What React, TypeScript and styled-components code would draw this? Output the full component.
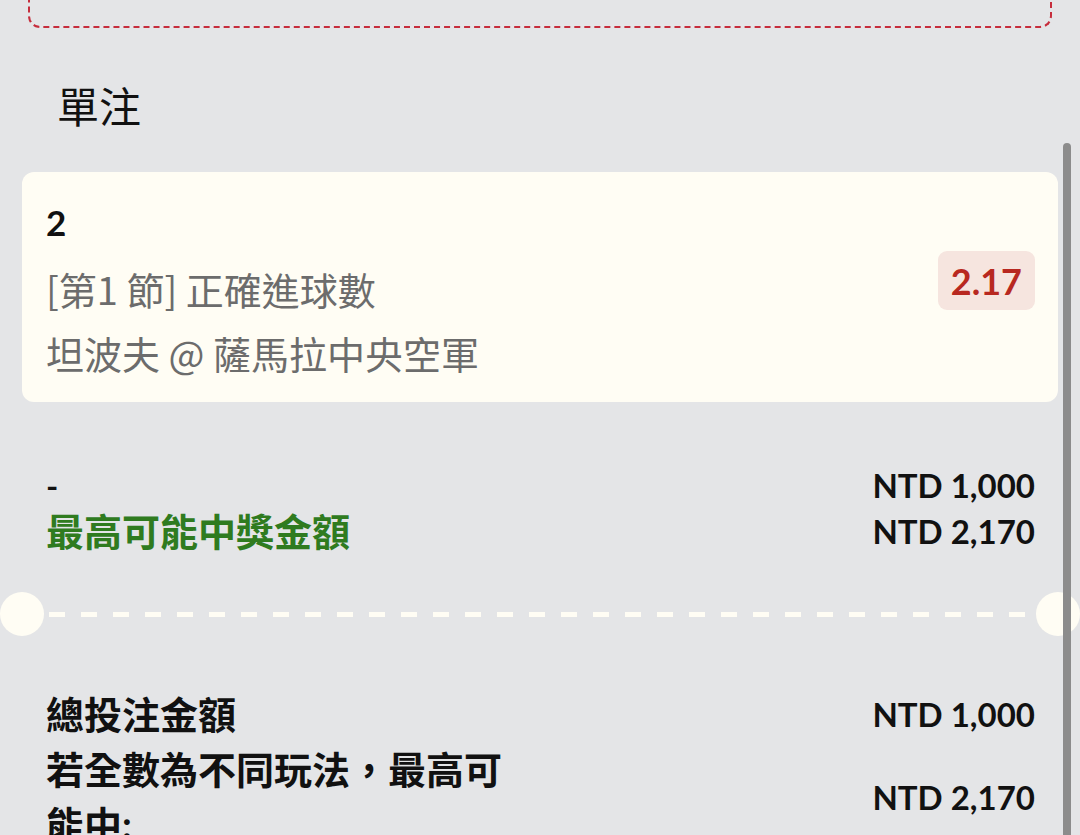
import styled, {createGlobalStyle} from "styled-components";

const GlobalStyle = createGlobalStyle`
    html, body {
        margin: 0;
        padding: 0;
        background: #e4e5e7;
        overflow: hidden;
    }

    body {
        font-family: Lato, "Noto Sans CJK TC", "Noto Sans", sans-serif;
        color: #111;
    }
`

const Page = styled.div`
    position: relative;
    width: 1080px;
    height: 835px;
    overflow: hidden;
`

const CouponBox = styled.div`
    height: 64px;
    margin: -38px 28px 0 28px;
    border: 2px dashed #c62d3c;
    border-top: none;
    border-radius: 0 0 12px 12px;
`

const Title = styled.h2`
    margin: 52px 0 0 0;
    padding-left: 57px;
    font-family: "Noto Sans CJK TC", sans-serif;
    font-size: 42px;
    line-height: 50px;
    font-weight: 400;
    color: #111;
`

const Card = styled.div`
    margin: 42px 22px 0 22px;
    padding: 30px 23px 17px 24px;
    background: #fffdf4;
    border-radius: 12px;
    display: flex;
    align-items: center;
    justify-content: space-between;
`

const CardInfo = styled.div`
    display: flex;
    flex-direction: column;
`

const Selection = styled.div`
    font-size: 35px;
    line-height: 40px;
    font-weight: 700;
    margin-bottom: 15px;
`

const InfoLine = styled.div`
    font-family: "Noto Sans CJK TC", sans-serif;
    font-size: 38px;
    line-height: 64px;
    color: #6c6c6c;
`

const Odds = styled.div`
    margin-bottom: 26px;
    padding: 0 13px;
    height: 59px;
    display: flex;
    align-items: center;
    background: #f6e5df;
    border-radius: 9px;
    color: #b82820;
    font-size: 36px;
    font-weight: 700;
`

const Rows = styled.div<{ top: number; lineHeight: number }>`
    margin-top: ${({top}) => top}px;
    padding: 0 45px 0 46px;
    display: flex;
    flex-direction: column;
    line-height: ${({lineHeight}) => lineHeight}px;
`

const Row = styled.div`
    display: flex;
    justify-content: space-between;
    align-items: center;
`

const Label = styled.div<{ tone?: "green" }>`
    max-width: 480px;
    font-size: 38px;
    font-weight: 700;
    color: ${({tone}) => tone === "green" ? "#2f7b1f" : "#111"};
`

const Dash = styled.div`
    font-size: 33px;
    font-weight: 700;
`

const Amount = styled.div`
    font-size: 33px;
    font-weight: 700;
    white-space: nowrap;
`

const Divider = styled.div`
    margin-top: 38px;
    height: 44px;
    display: flex;
    align-items: center;
`

const Notch = styled.div`
    width: 44px;
    height: 44px;
    border-radius: 50%;
    background: #fffdf4;
    flex-shrink: 0;
`

const DashLine = styled.div`
    flex: 1;
    height: 5px;
    margin: 0 6px 0 5px;
    background: repeating-linear-gradient(to right, #fffdf4 0 16px, transparent 16px 32px);
`

const ScrollThumb = styled.div`
    position: absolute;
    right: 9px;
    top: 143px;
    width: 8px;
    height: 760px;
    border-radius: 4px;
    background: #8c8c8c;
`

export default function App() {
    return (
        <>
            <GlobalStyle/>
            <Page>
                <CouponBox/>
                <Title>單注</Title>
                <Card>
                    <CardInfo>
                        <Selection>2</Selection>
                        <InfoLine>[第1 節] 正確進球數</InfoLine>
                        <InfoLine>坦波夫 @ 薩馬拉中央空軍</InfoLine>
                    </CardInfo>
                    <Odds>2.17</Odds>
                </Card>

                <Rows top={60} lineHeight={46}>
                    <Row>
                        <Dash>-</Dash>
                        <Amount>NTD 1,000</Amount>
                    </Row>
                    <Row>
                        <Label tone="green">最高可能中獎金額</Label>
                        <Amount>NTD 2,170</Amount>
                    </Row>
                </Rows>

                <Divider>
                    <Notch/>
                    <DashLine/>
                    <Notch/>
                </Divider>

                <Rows top={51} lineHeight={55}>
                    <Row>
                        <Label>總投注金額</Label>
                        <Amount>NTD 1,000</Amount>
                    </Row>
                    <Row>
                        <Label>若全數為不同玩法，最高可能中:</Label>
                        <Amount>NTD 2,170</Amount>
                    </Row>
                </Rows>

                <ScrollThumb/>
            </Page>
        </>
    );
}
